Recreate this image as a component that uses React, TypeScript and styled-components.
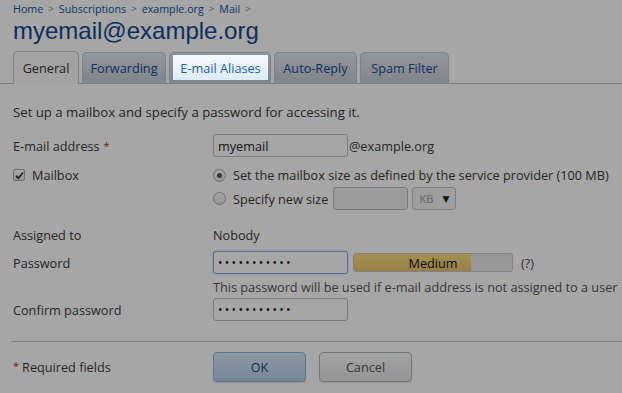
import styled, { createGlobalStyle } from "styled-components";

const GlobalStyle = createGlobalStyle`
    html, body {
        margin: 0;
        padding: 0;
        background: #ffffff;
        width: 622px;
        height: 393px;
        overflow: hidden;
    }
    body {
        font-family: "Open Sans", "DejaVu Sans", sans-serif;
        font-size: 12.7px;
        color: #3a3a3a;
    }
`;

const Page = styled.div`
    display: flex;
    flex-direction: column;
    padding: 0 0 0 13px;
`;

const Breadcrumbs = styled.div`
    display: flex;
    align-items: center;
    gap: 5px;
    height: 14px;
    margin-top: 2px;
    font-size: 10.7px;
    line-height: 14px;
`;

const Crumb = styled.a`
    color: #1553a3;
    text-decoration: none;
`;

const CrumbSep = styled.span`
    color: #777;
    font-size: 9.7px;
`;

const Title = styled.h1`
    margin: 1px 0 0;
    font-family: "Liberation Sans", Arial, sans-serif;
    font-weight: normal;
    font-size: 24px;
    line-height: 28px;
    color: #124a90;
`;

const TabBar = styled.div`
    display: flex;
    align-items: flex-end;
    gap: 3px;
    height: 32px;
    margin-top: 6px;
    margin-left: -13px;
    padding-left: 13px;
    border-bottom: 1px solid #c4c4c4;
`;

const Tab = styled.div<{ $active?: boolean; $w: number }>`
    display: flex;
    align-items: center;
    justify-content: center;
    box-sizing: border-box;
    width: ${(p) => p.$w}px;
    height: ${(p) => (p.$active ? "33px" : "31px")};
    margin-bottom: ${(p) => (p.$active ? "-1px" : "0")};
    border: 1px solid #c0cad3;
    border-bottom: none;
    border-radius: 5px 5px 0 0;
    background: ${(p) =>
        p.$active
            ? "#fafafa"
            : "linear-gradient(#e0e7ee, #c3ced8)"};
    color: ${(p) => (p.$active ? "#333" : "#17498f")};
    font-size: 12.7px;
    white-space: nowrap;
`;

const SpotlightSlot = styled(Tab)`
    align-items: flex-end;
    justify-content: flex-start;
`;

const Spotlight = styled.div`
    position: relative;
    z-index: 10;
    display: flex;
    align-items: center;
    justify-content: center;
    width: 95px;
    height: 25px;
    margin: 0 0 3px 3px;
    background: linear-gradient(#f6faff, #dcecf8);
    color: #1f5db0;
`;

const Intro = styled.p`
    margin: 19px 0 0;
    font-size: 13.2px;
    line-height: 18px;
`;

const Form = styled.div`
    display: flex;
    flex-direction: column;
`;

const Row = styled.div<{ $top: number; $h?: number }>`
    display: grid;
    grid-template-columns: 200px 1fr;
    align-items: center;
    margin-top: ${(p) => p.$top}px;
    min-height: ${(p) => p.$h ?? 18}px;
`;

const Label = styled.div<{ $gap?: number }>`
    display: flex;
    align-items: center;
    gap: ${(p) => p.$gap ?? 7}px;
    line-height: 18px;
`;

const Star = styled.span`
    color: #c1272d;
    font-size: 11px;
`;

const Field = styled.div`
    display: flex;
    align-items: center;
    gap: 5px;
    line-height: 18px;
    white-space: nowrap;
`;

const TextInput = styled.div<{ $focused?: boolean; $disabled?: boolean; $w?: number }>`
    box-sizing: border-box;
    width: ${(p) => p.$w ?? 135}px;
    height: 23px;
    padding: 0 4px;
    display: flex;
    align-items: center;
    border: 1px solid ${(p) => (p.$focused ? "#84acd6" : "#bdbdbd")};
    border-radius: 3px;
    background: ${(p) => (p.$disabled ? "#efefef" : "#fff")};
    color: #222;
    font-size: 12.7px;
    box-shadow: ${(p) => (p.$focused ? "0 0 2px rgba(100,150,210,0.5)" : "none")};
`;

const Dots = styled.span`
    font-size: 12px;
    letter-spacing: 2.3px;
    color: #222;
`;

const Suffix = styled.span`
    margin-left: -4px;
`;

const CheckBox = styled.span`
    box-sizing: border-box;
    width: 12px;
    height: 12px;
    border: 1px solid #aaa;
    border-radius: 2px;
    background: linear-gradient(#fff, #e8e8e8);
    display: flex;
    align-items: center;
    justify-content: center;
`;

const Radio = styled.span<{ $on?: boolean }>`
    box-sizing: border-box;
    width: 13px;
    height: 13px;
    border: 1px solid #aaa;
    border-radius: 50%;
    background: linear-gradient(#fff, #e6e6e6);
    display: flex;
    align-items: center;
    justify-content: center;
    margin-right: 2px;

    &::after {
        content: "";
        display: ${(p) => (p.$on ? "block" : "none")};
        width: 5px;
        height: 5px;
        border-radius: 50%;
        background: #555;
    }
`;

const Select = styled.div`
    box-sizing: border-box;
    width: 44px;
    height: 23px;
    margin-left: -1px;
    padding: 0 6px;
    display: flex;
    align-items: center;
    justify-content: space-between;
    border: 1px solid #c4c4c4;
    border-radius: 3px;
    background: #f2f2f2;
    color: #999;
    font-size: 11px;
`;

const Caret = styled.span`
    color: #222;
    font-size: 9px;
`;

const Strength = styled.div`
    position: relative;
    box-sizing: border-box;
    width: 160px;
    height: 19px;
    border: 1px solid #c8c8c8;
    border-radius: 3px;
    background: #e8e8e8;
    overflow: hidden;
    display: flex;
    align-items: center;
    justify-content: center;
`;

const StrengthFill = styled.div`
    position: absolute;
    left: 0;
    top: 0;
    bottom: 0;
    background: linear-gradient(#f9e37a, #eac56a);
`;

const StrengthText = styled.span`
    position: relative;
    color: #111;
    font-size: 12.7px;
`;

const Help = styled.span`
    margin-left: 3px;
    color: #444;
`;

const Hint = styled.div`
    color: #555;
    line-height: 18px;
    white-space: nowrap;
`;

const Divider = styled.hr`
    margin: 20px 0 0 -2px;
    border: none;
    border-top: 1px solid #c4c4c4;
`;

const Footer = styled.div`
    display: grid;
    grid-template-columns: 200px 1fr;
    align-items: center;
    margin-top: 10px;
`;

const Required = styled.span`
    display: flex;
    gap: 3px;
`;

const Buttons = styled.div`
    display: flex;
    gap: 13px;
`;

const Button = styled.button<{ $primary?: boolean }>`
    box-sizing: border-box;
    width: 93px;
    height: 30px;
    border-radius: 4px;
    border: 1px solid ${(p) => (p.$primary ? "#8fb3da" : "#b3b3b3")};
    background: ${(p) =>
        p.$primary
            ? "linear-gradient(#d9ecfd, #b6cee6)"
            : "linear-gradient(#fbfbfb, #e2e4e6)"};
    color: ${(p) => (p.$primary ? "#1f4670" : "#555")};
    font-family: inherit;
    font-size: 12.7px;
    box-shadow: 0 1px 1px rgba(0, 0, 0, 0.12);
`;

const Overlay = styled.div`
    position: fixed;
    inset: 0;
    background: rgba(0, 0, 0, 0.35);
    z-index: 5;
`;

const CheckMark = () => (
    <svg width="9" height="9" viewBox="0 0 9 9">
        <path d="M1 4.8 L3.4 7.2 L8 1.5" fill="none" stroke="#333" strokeWidth="1.8" />
    </svg>
);

const DOTS = "•••••••••••";

export default function App() {
    return (
        <>
            <GlobalStyle />
            <Page>
                <Breadcrumbs>
                    <Crumb>Home</Crumb>
                    <CrumbSep>&gt;</CrumbSep>
                    <Crumb>Subscriptions</Crumb>
                    <CrumbSep>&gt;</CrumbSep>
                    <Crumb>example.org</Crumb>
                    <CrumbSep>&gt;</CrumbSep>
                    <Crumb>Mail</Crumb>
                    <CrumbSep>&gt;</CrumbSep>
                </Breadcrumbs>
                <Title>myemail@example.org</Title>
                <TabBar>
                    <Tab $active $w={66}>General</Tab>
                    <Tab $w={84}>Forwarding</Tab>
                    <SpotlightSlot $w={102}>
                        <Spotlight>E-mail Aliases</Spotlight>
                    </SpotlightSlot>
                    <Tab $w={83}>Auto-Reply</Tab>
                    <Tab $w={89}>Spam Filter</Tab>
                </TabBar>

                <Intro>Set up a mailbox and specify a password for accessing it.</Intro>

                <Form>
                    <Row $top={13} $h={23}>
                        <Label $gap={4}>
                            <span>E-mail address</span>
                            <Star>*</Star>
                        </Label>
                        <Field>
                            <TextInput>myemail</TextInput>
                            <Suffix>@example.org</Suffix>
                        </Field>
                    </Row>
                    <Row $top={9}>
                        <Label>
                            <CheckBox>
                                <CheckMark />
                            </CheckBox>
                            <span>Mailbox</span>
                        </Label>
                        <Field>
                            <Radio $on />
                            <span>Set the mailbox size as defined by the service provider (100 MB)</span>
                        </Field>
                    </Row>
                    <Row $top={3} $h={23}>
                        <span />
                        <Field>
                            <Radio />
                            <span>Specify new size</span>
                            <TextInput $disabled $w={75} />
                            <Select>
                                KB <Caret>▼</Caret>
                            </Select>
                        </Field>
                    </Row>
                    <Row $top={16}>
                        <Label>Assigned to</Label>
                        <Field>Nobody</Field>
                    </Row>
                    <Row $top={7} $h={23}>
                        <Label>Password</Label>
                        <Field>
                            <TextInput $focused>
                                <Dots>{DOTS}</Dots>
                            </TextInput>
                            <Strength>
                                <StrengthFill style={{ width: "74%" }} />
                                <StrengthText>Medium</StrengthText>
                            </Strength>
                            <Help>(?)</Help>
                        </Field>
                    </Row>
                    <Row $top={4}>
                        <span />
                        <Hint>This password will be used if e-mail address is not assigned to a user</Hint>
                    </Row>
                    <Row $top={2} $h={23}>
                        <Label>Confirm password</Label>
                        <Field>
                            <TextInput>
                                <Dots>{DOTS}</Dots>
                            </TextInput>
                        </Field>
                    </Row>
                </Form>

                <Divider />

                <Footer>
                    <Required>
                        <Star>*</Star>
                        <span>Required fields</span>
                    </Required>
                    <Buttons>
                        <Button $primary>OK</Button>
                        <Button>Cancel</Button>
                    </Buttons>
                </Footer>
            </Page>
            <Overlay />
        </>
    );
}
